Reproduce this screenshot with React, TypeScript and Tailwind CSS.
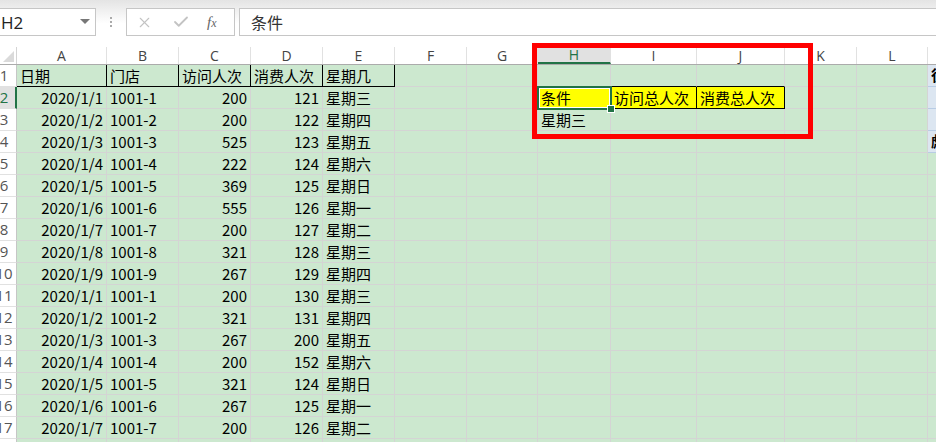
import { X, Check } from "lucide-react";

// column widths (A..M)
const COLS = ["A", "B", "C", "D", "E", "F", "G", "H", "I", "J", "K", "L", "M"];
const COL_W = [
  "w-[90px]",
  "w-[72px]",
  "w-[72px]",
  "w-[72px]",
  "w-[72px]",
  "w-[72px]",
  "w-[71px]",
  "w-[73px]",
  "w-[86px]",
  "w-[88px]",
  "w-[72px]",
  "w-[71px]",
  "w-[40px]",
];

type Val = string | number | null;

const DATA: Val[][] = [
  ["2020/1/1", "1001-1", 200, 121, "星期三"],
  ["2020/1/2", "1001-2", 200, 122, "星期四"],
  ["2020/1/3", "1001-3", 525, 123, "星期五"],
  ["2020/1/4", "1001-4", 222, 124, "星期六"],
  ["2020/1/5", "1001-5", 369, 125, "星期日"],
  ["2020/1/6", "1001-6", 555, 126, "星期一"],
  ["2020/1/7", "1001-7", 200, 127, "星期二"],
  ["2020/1/8", "1001-8", 321, 128, "星期三"],
  ["2020/1/9", "1001-9", 267, 129, "星期四"],
  ["2020/1/1", "1001-1", 200, 130, "星期三"],
  ["2020/1/2", "1001-2", 321, 131, "星期四"],
  ["2020/1/3", "1001-3", 267, 200, "星期五"],
  ["2020/1/4", "1001-4", 200, 152, "星期六"],
  ["2020/1/5", "1001-5", 321, 124, "星期日"],
  ["2020/1/6", "1001-6", 267, 125, "星期一"],
  ["2020/1/7", "1001-7", 200, 126, "星期二"],
];

function cellValue(r: number, c: number): Val {
  if (r === 1) return ["日期", "门店", "访问人次", "消费人次", "星期几"][c] ?? null;
  if (r === 2 && c >= 7 && c <= 9) return ["条件", "访问总人次", "消费总人次"][c - 7];
  if (r === 3 && c === 7) return "星期三";
  const row = DATA[r - 2];
  if (row && c < 5) return row[c];
  return null;
}

function Cell({ r, c }: { r: number; c: number }) {
  const v = cellValue(r, c);
  const isNum = typeof v === "number" || (typeof v === "string" && /^\d{4}\//.test(v));
  const headBlock = r === 1 && c <= 4;
  const yellow = r === 2 && c >= 7 && c <= 9;
  const aboveYellow = r === 1 && c >= 7 && c <= 9;
  const leftOfYellow = r === 2 && c === 6;
  const blueStrip = c === 12 && r <= 4;

  const right = headBlock || yellow || leftOfYellow ? "border-r-black" : blueStrip ? "border-r-[#b8cce4]" : "border-r-[#d4d4d4]";
  const bottom = headBlock || yellow || aboveYellow ? "border-b-black" : blueStrip ? "border-b-[#b8cce4]" : "border-b-[#d4d4d4]";
  const bg = yellow ? "bg-[#ffff00]" : blueStrip ? "bg-[#dce6f1]" : "bg-[#cce8cf]";

  return (
    <div
      className={`${COL_W[c]} h-[22px] shrink-0 border-r border-b ${right} ${bottom} ${bg} flex items-center overflow-hidden whitespace-nowrap ${
        isNum ? "justify-end pr-[3px]" : "justify-start pl-[3px]"
      }`}
    >
      {v !== null && <span className="pt-[1px]">{v}</span>}
      {blueStrip && (r === 1 || r === 4) && (
        <span className="font-bold text-[15px]">{r === 1 ? "彷" : "彪"}</span>
      )}
    </div>
  );
}

function RowHeader({ r }: { r: number }) {
  const active = r === 2;
  return (
    <div
      className={`w-[17px] h-[22px] shrink-0 overflow-hidden border-b border-b-[#e1e1e1] ${
        active ? "bg-[#e1e1e1] border-r-2 border-r-[#217346] text-[#217346]" : "bg-white border-r border-r-[#c6c6c6] text-[#555]"
      }`}
    >
      <div className="w-[24px] ml-[-8px] h-full flex items-center justify-center text-[15px] font-['Open_Sans',sans-serif]">
        {r}
      </div>
    </div>
  );
}

function FormulaBar() {
  return (
    <div className="h-[47px] bg-gradient-to-b from-[#e4e4e4] via-white to-white pt-[8px]">
      <div className="flex items-start h-[28px]">
        <div className="w-[96px] h-[28px] border border-[#c6c6c6] border-l-0 bg-white flex items-center justify-between pl-[1px] pr-[4px]">
          <span className="text-[17px] text-[#222] font-['Open_Sans',sans-serif] leading-none">H2</span>
          <svg width="10" height="6" viewBox="0 0 10 6" className="mr-[1px]">
            <path d="M0 0h10L5 5z" fill="#777" />
          </svg>
        </div>
        <div className="w-[30px] h-[28px] flex flex-col items-center justify-center gap-[2px]">
          <span className="w-[2px] h-[2px] bg-[#aaa]" />
          <span className="w-[2px] h-[2px] bg-[#aaa]" />
          <span className="w-[2px] h-[2px] bg-[#aaa]" />
        </div>
        <div className="w-[109px] h-[28px] border border-[#c6c6c6] bg-white flex items-center">
          <X size={17} strokeWidth={1.6} className="text-[#c3c3c3] ml-[9px]" />
          <Check size={18} strokeWidth={2.4} className="text-[#c3c3c3] ml-[19px]" />
          <span className="ml-[17px] text-[15px] italic text-[#666] font-['Liberation_Serif',serif] leading-none">
            f<span className="text-[12px]">x</span>
          </span>
        </div>
        <div className="flex-1 ml-[4px] h-[28px] border border-[#c6c6c6] border-r-0 bg-white flex items-center pl-[11px]">
          <span className="text-[16px] text-[#333] font-['Noto_Sans_CJK_SC',sans-serif]">条件</span>
        </div>
      </div>
    </div>
  );
}

function ColumnHeader() {
  return (
    <div className="flex h-[18px] bg-white border-b border-b-[#ababab]">
      <div className="w-[17px] h-full shrink-0 border-r border-r-[#d4d4d4] flex items-end justify-end pr-[2px] pb-[2px]">
        <svg width="11" height="11" viewBox="0 0 11 11">
          <path d="M11 0v11H0z" fill="#dadada" />
        </svg>
      </div>
      {COLS.map((col, i) => {
        const active = col === "H";
        return (
          <div
            key={col}
            className={`${COL_W[i]} h-full shrink-0 flex items-center justify-center text-[14px] font-['Open_Sans',sans-serif] border-r border-r-[#e1e1e1] ${
              active ? "bg-[#e1e1e1] text-[#217346] border-b-2 border-b-[#217346]" : "text-[#444]"
            }`}
          >
            {col === "M" ? "" : col}
          </div>
        );
      })}
    </div>
  );
}

export default function App() {
  const rows = Array.from({ length: 18 }, (_, i) => i + 1);

  return (
    <div className="relative w-[936px] h-[442px] overflow-hidden bg-white font-['Noto_Sans_CJK_SC',sans-serif] text-[15px] text-black">
      <FormulaBar />
      <ColumnHeader />

      {/* grid */}
      <div className="flex flex-col">
        {rows.map((r) => (
          <div key={r} className="flex">
            <RowHeader r={r} />
            {COLS.map((_, c) => (
              <Cell key={c} r={r} c={c} />
            ))}
          </div>
        ))}
      </div>

      {/* active cell H2 */}
      <div className="absolute left-[537px] top-[86px] w-[75px] h-[24px] border-2 border-[#217346] shadow-[inset_0_0_0_1px_white]" />
      <div className="absolute left-[608px] top-[106px] w-[6px] h-[6px] bg-[#217346] outline outline-1 outline-white" />

      {/* red highlight box */}
      <div className="absolute left-[532px] top-[43px] w-[281px] h-[96px] border-[5px] border-[#ff0000]" />
    </div>
  );
}
